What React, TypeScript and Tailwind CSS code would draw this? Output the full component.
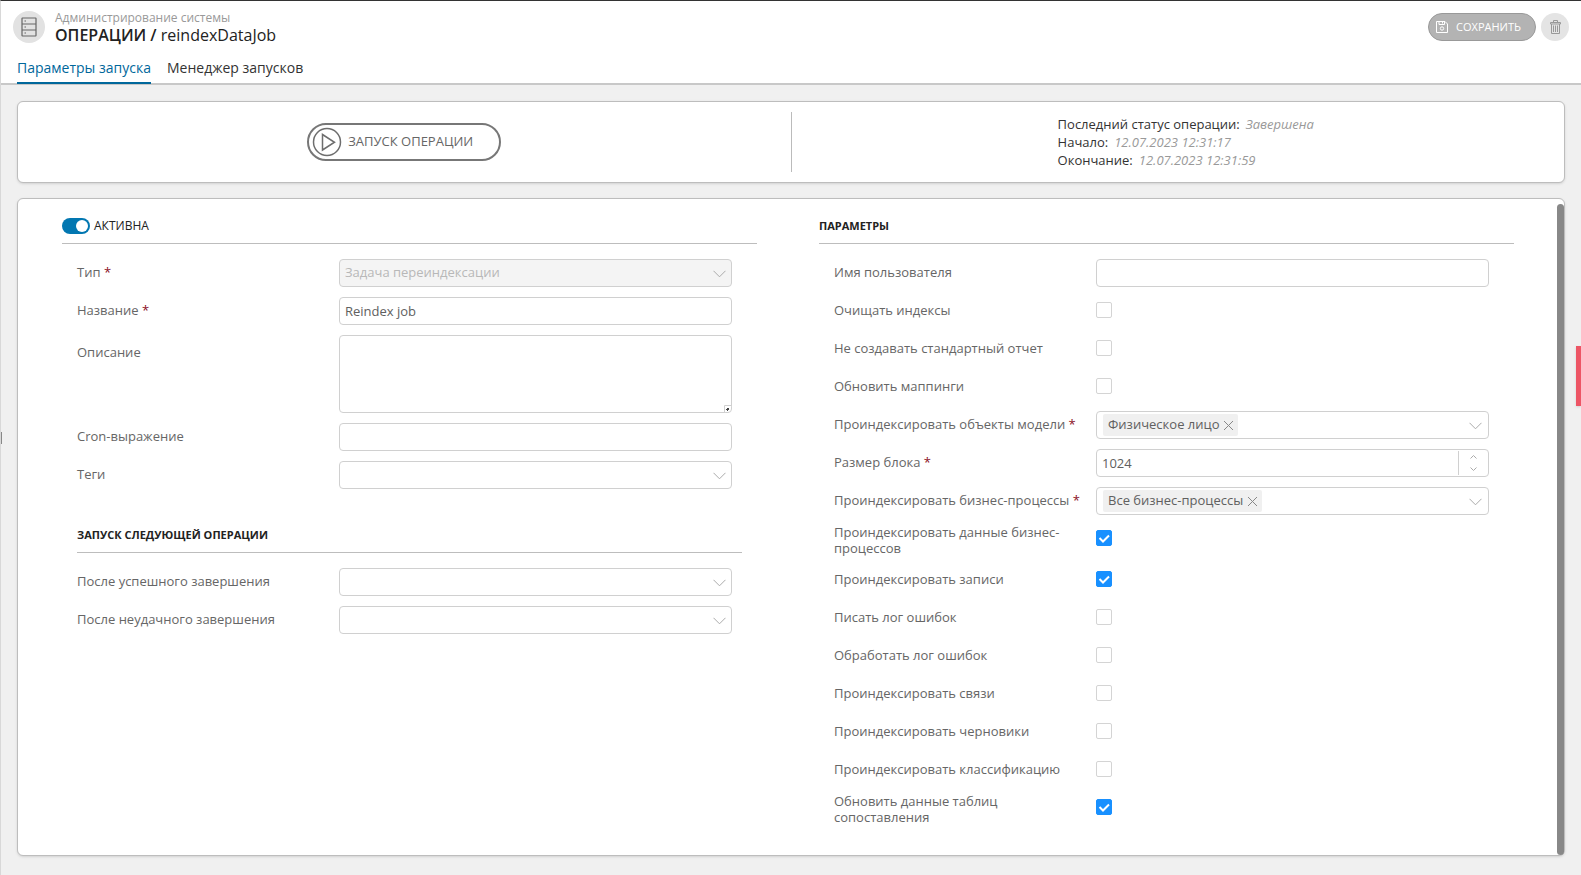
import { useId, useState, type ReactNode } from "react";
import clsx from "clsx";

interface LabelProps {
  htmlFor?: string;
  required?: boolean;
  tall?: boolean;
  children: ReactNode;
}

interface FieldProps {
  label: string;
  required?: boolean;
}

const boxClass = "h-7 w-full rounded border border-[#d0d0d0] bg-white px-[5px] text-[13px] text-[#606060] outline-none";

function ServerIcon() {
  return (
    <svg className="h-5 w-4" viewBox="0 0 16 20" fill="none" stroke="#666" strokeWidth="1.2">
      <rect x="1" y="1" width="14" height="18" rx="0.5" />
      <path d="M1 7h14M1 13h14" />
      <path d="M3.5 4h1.5M3.5 10h1.5M3.5 16h1.5" />
    </svg>
  );
}

function SaveIcon() {
  return (
    <svg className="h-3 w-3" viewBox="0 0 12 12" fill="none" stroke="#fff">
      <path d="M.5.5h8.500l2.500 2.500v8.500H.5z" />
      <path d="M3 .5v3h5.500v-3M6.500 1v1.500" />
      <circle cx="6" cy="7.500" r="1.700" />
    </svg>
  );
}

function TrashIcon() {
  return (
    <svg className="h-[14px] w-[11px]" viewBox="0 0 11 14" fill="none" stroke="#999">
      <path d="M.5 2.500h10v1.500H.5zM3.500 2.500v-2h4v2" />
      <path d="M1.500 4v9.500h8V4M3.500 5.500v6.500M5.500 5.500v6.500M7.500 5.500v6.500" />
    </svg>
  );
}

function PlayIcon() {
  return (
    <svg className="h-[30px] w-[30px]" viewBox="0 0 30 30" fill="none" stroke="#6e6e6e" strokeWidth="1.500">
      <circle cx="15" cy="15" r="13.500" />
      <path d="M10.500 7.500v15.500l12-7.750z" />
    </svg>
  );
}

function Chevron() {
  return (
    <svg className="pointer-events-none h-2 w-[13px]" viewBox="0 0 13 8" fill="none" stroke="#aaa">
      <path d="M.5 .8l6 6 6-6" />
    </svg>
  );
}

function Label({ htmlFor, required, tall, children }: LabelProps) {
  return (
    <label
      htmlFor={htmlFor}
      className={clsx("-mt-px flex w-2/5 shrink-0 items-center pr-2 text-[13px] leading-4", tall ? "min-h-9" : "min-h-7")}
    >
      <span>
        {children}
        {required && <span className="font-medium text-[#8b0f1e]"> *</span>}
      </span>
    </label>
  );
}

function Row({ children }: { children: ReactNode }) {
  return <div className="flex min-h-7 items-start">{children}</div>;
}

function TextField({ label, required, value = "" }: FieldProps & { value?: string }) {
  const id = useId();
  return (
    <Row>
      <Label htmlFor={id} required={required}>{label}</Label>
      <input id={id} type="text" defaultValue={value} className={boxClass} />
    </Row>
  );
}

function TextAreaField({ label }: FieldProps) {
  const id = useId();
  return (
    <Row>
      <Label htmlFor={id} tall>{label}</Label>
      <div className="relative flex w-full">
        <textarea id={id} className="h-[78px] w-full resize-none rounded border border-[#d0d0d0] px-[5px] py-1 text-[13px] outline-none" />
        <svg className="pointer-events-none absolute right-0 bottom-0 h-2 w-2" viewBox="0 0 8 8" fill="none">
          <path d="M.5 8V.5H8" fill="#fff" stroke="#d0d0d0" />
          <path d="M3 3h2v1h-2zM2 4h3v1h-3zM3 5h1v1h-1z" fill="#444" />
        </svg>
      </div>
    </Row>
  );
}

function SelectField({ label, required, value = "", disabled }: FieldProps & { value?: string; disabled?: boolean }) {
  const id = useId();
  return (
    <Row>
      <Label htmlFor={id} required={required}>{label}</Label>
      <div className="relative w-full">
        <select
          id={id}
          defaultValue={value}
          disabled={disabled}
          className="block h-7 w-full appearance-none rounded border border-[#d0d0d0] bg-white px-[5px] text-[13px] text-[#606060] outline-none disabled:bg-[#f4f4f4] disabled:text-[#b8b8b8] disabled:opacity-100"
        >
          <option value={value}>{value}</option>
        </select>
        <span className="pointer-events-none absolute inset-y-0 right-1.5 flex items-center pt-0.5">
          <Chevron />
        </span>
      </div>
    </Row>
  );
}

function TagField({ label, required, tags }: FieldProps & { tags: string[] }) {
  const id = useId();
  const [items, setItems] = useState(tags);
  return (
    <Row>
      <Label htmlFor={id} required={required}>{label}</Label>
      <div className="flex h-7 w-full items-center gap-1 rounded border border-[#d0d0d0] bg-white px-1.5">
        {items.map((item) => (
          <span key={item} className="flex h-[22px] shrink-0 items-center gap-1 rounded-xs bg-[#f0f0f0] pr-1 pl-[5px] text-[13px] text-[#606060]">
            {item}
            <button type="button" aria-label={`Удалить ${item}`} onClick={() => setItems(items.filter((i) => i !== item))}>
              <svg className="h-[11px] w-[11px]" viewBox="0 0 11 11" fill="none" stroke="#888">
                <path d="M1 1l9 9M10 1l-9 9" />
              </svg>
            </button>
          </span>
        ))}
        <input id={id} type="text" className="h-full min-w-0 flex-1 outline-none" />
        <span className="pt-0.5">
          <Chevron />
        </span>
      </div>
    </Row>
  );
}

function NumberField({ label, required, value }: FieldProps & { value: number }) {
  const id = useId();
  const [count, setCount] = useState(value);
  return (
    <Row>
      <Label htmlFor={id} required={required}>{label}</Label>
      <div className="flex h-7 w-full items-center rounded border border-[#d0d0d0] bg-white">
        <input
          id={id}
          type="text"
          inputMode="numeric"
          value={count}
          onChange={(e) => setCount(Number(e.target.value) || 0)}
          className="h-full min-w-0 flex-1 px-[5px] text-[13px] text-[#606060] outline-none"
        />
        <div className="flex h-6 w-[30px] flex-col items-center justify-between border-l border-[#d0d0d0] py-1">
          <button type="button" aria-label="Увеличить" className="flex" onClick={() => setCount(count + 1)}>
            <svg className="h-1 w-[7px]" viewBox="0 0 7 4" fill="none" stroke="#aaa">
              <path d="M.5 3.500l3-3 3 3" />
            </svg>
          </button>
          <button type="button" aria-label="Уменьшить" className="flex" onClick={() => setCount(count - 1)}>
            <svg className="h-1 w-[7px]" viewBox="0 0 7 4" fill="none" stroke="#aaa">
              <path d="M.5 .5l3 3 3-3" />
            </svg>
          </button>
        </div>
      </div>
    </Row>
  );
}

function CheckField({ label, checked = false }: FieldProps & { checked?: boolean }) {
  const id = useId();
  return (
    <Row>
      <Label htmlFor={id}>{label}</Label>
      <span className="relative mt-[5px] flex h-4 w-4">
        <input
          id={id}
          type="checkbox"
          defaultChecked={checked}
          className="peer h-4 w-4 appearance-none rounded-xs border border-[#d4d4d4] bg-white checked:border-[#1890ff] checked:bg-[#1890ff]"
        />
        <svg className="pointer-events-none absolute inset-0 hidden h-4 w-4 peer-checked:block" viewBox="0 0 16 16" fill="none" stroke="#fff" strokeWidth="2">
          <path d="M3.500 8l3.500 3.500 6-6" />
        </svg>
      </span>
    </Row>
  );
}

function Header() {
  return (
    <header className="border-b-2 border-[#c8c8c8] bg-white">
      <div className="flex items-start justify-between px-3 pt-2.5">
        <div className="flex gap-2.5">
          <span className="flex h-8 w-8 items-center justify-center rounded-full bg-[#e2e2e2]">
            <ServerIcon />
          </span>
          <div>
            <p className="text-xs leading-[14px] text-[#999]">Администрирование системы</p>
            <h1 className="text-base leading-5 text-[#222]">
              <span className="font-semibold">ОПЕРАЦИИ /</span> reindexDataJob
            </h1>
          </div>
        </div>
        <div className="flex gap-[5px] pt-0.5">
          <button type="button" className="flex h-7 items-center gap-2 rounded-full border border-[#999] bg-[#b3b3b3] pr-3.5 pl-[7px] text-[11px] font-medium text-white">
            <SaveIcon />
            СОХРАНИТЬ
          </button>
          <button type="button" aria-label="Удалить" className="flex h-7 w-7 items-center justify-center rounded-full bg-[#e4e4e4]">
            <TrashIcon />
          </button>
        </div>
      </div>
      <nav className="-mb-px flex gap-4 pt-[13px] pl-4 text-sm">
        <a href="#params" className="border-b-2 border-[#00679b] pb-1 text-[#00679b]">Параметры запуска</a>
        <a href="#manager" className="pb-1 text-[#333]">Менеджер запусков</a>
      </nav>
    </header>
  );
}

function StatusLine({ name, value }: { name: string; value: string }) {
  return (
    <div className="flex gap-1.5">
      <dt className="font-medium text-[#333]">{name}</dt>
      <dd className="text-[#999] italic">{value}</dd>
    </div>
  );
}

function LaunchPanel() {
  return (
    <section className="flex h-[82px] items-center rounded-md border border-[#bdbdbd] bg-white shadow-sm">
      <div className="flex flex-1 justify-center">
        <button type="button" className="flex h-[38px] items-center gap-1.5 rounded-full border-2 border-[#777] pr-[26px] pl-[3px] text-[13px] text-[#666]">
          <PlayIcon />
          ЗАПУСК ОПЕРАЦИИ
        </button>
      </div>
      <div className="h-[60px] w-px bg-[#bbb]" />
      <div className="flex flex-1 justify-center">
        <dl className="pl-4 text-[13px] leading-[18px]">
          <StatusLine name="Последний статус операции:" value="Завершена" />
          <StatusLine name="Начало:" value="12.07.2023 12:31:17" />
          <StatusLine name="Окончание:" value="12.07.2023 12:31:59" />
        </dl>
      </div>
    </section>
  );
}

function GeneralColumn() {
  return (
    <div className="flex-1">
      <label className="flex h-[45px] items-center gap-1 border-b border-[#bdbdbd] pt-2.5 text-xs font-medium text-[#222]">
        <input type="checkbox" role="switch" defaultChecked className="peer sr-only" />
        <span className="flex h-4 w-7 items-center justify-start rounded-full bg-[#bbb] px-0.5 peer-checked:justify-end peer-checked:bg-[#0277b1]">
          <span className="h-3 w-3 rounded-full bg-white" />
        </span>
        АКТИВНА
      </label>
      <div className="px-[15px]">
        <div className="flex flex-col gap-2.5 py-[15px] pr-2.5">
          <SelectField label="Тип" required value="Задача переиндексации" disabled />
          <TextField label="Название" required value="Reindex job" />
          <TextAreaField label="Описание" />
          <TextField label="Cron-выражение" />
          <SelectField label="Теги" />
        </div>
        <h2 className="mt-1 flex h-[45px] items-center border-b border-[#bdbdbd] pt-2.5 text-[11px] font-bold text-[#222]">
          ЗАПУСК СЛЕДУЮЩЕЙ ОПЕРАЦИИ
        </h2>
        <div className="flex flex-col gap-2.5 pt-[15px] pr-2.5">
          <SelectField label="После успешного завершения" />
          <SelectField label="После неудачного завершения" />
        </div>
      </div>
    </div>
  );
}

function ParamsColumn() {
  return (
    <div className="flex-1">
      <h2 className="flex h-[45px] items-center border-b border-[#bdbdbd] pt-2.5 text-[11px] font-bold text-[#222]">ПАРАМЕТРЫ</h2>
      <div className="flex flex-col gap-2.5 pt-[15px] pr-[25px] pl-[15px]">
        <TextField label="Имя пользователя" />
        <CheckField label="Очищать индексы" />
        <CheckField label="Не создавать стандартный отчет" />
        <CheckField label="Обновить маппинги" />
        <TagField label="Проиндексировать объекты модели" required tags={["Физическое лицо"]} />
        <NumberField label="Размер блока" required value={1024} />
        <TagField label="Проиндексировать бизнес-процессы" required tags={["Все бизнес-процессы"]} />
        <CheckField label="Проиндексировать данные бизнес-процессов" checked />
        <CheckField label="Проиндексировать записи" checked />
        <CheckField label="Писать лог ошибок" />
        <CheckField label="Обработать лог ошибок" />
        <CheckField label="Проиндексировать связи" />
        <CheckField label="Проиндексировать черновики" />
        <CheckField label="Проиндексировать классификацию" />
        <CheckField label="Обновить данные таблиц сопоставления" checked />
      </div>
    </div>
  );
}

export default function App() {
  return (
    <div className="relative flex min-h-screen flex-col border-t border-l border-t-[#333] border-l-[#d8d8d8] bg-[#f0f0f0] font-['Open_Sans','Noto_Sans',sans-serif] text-[#666]">
      <Header />
      <main className="flex flex-1 flex-col gap-[15px] px-4 pt-4 pb-[19px]">
        <LaunchPanel />
        <form className="flex flex-1 rounded-md border border-[#bdbdbd] bg-white shadow-sm">
          <div className="flex flex-1 gap-[62px] pr-[43px] pb-6 pl-11">
            <GeneralColumn />
            <ParamsColumn />
          </div>
          <div className="mt-[5px] w-[7px] rounded-full bg-[#888]" />
        </form>
      </main>
      <div className="absolute top-[431px] left-0 h-3 w-px bg-[#888]" />
      <div className="absolute top-[345px] right-0 h-[60px] w-[5px] bg-[#ed5565] shadow" />
    </div>
  );
}
